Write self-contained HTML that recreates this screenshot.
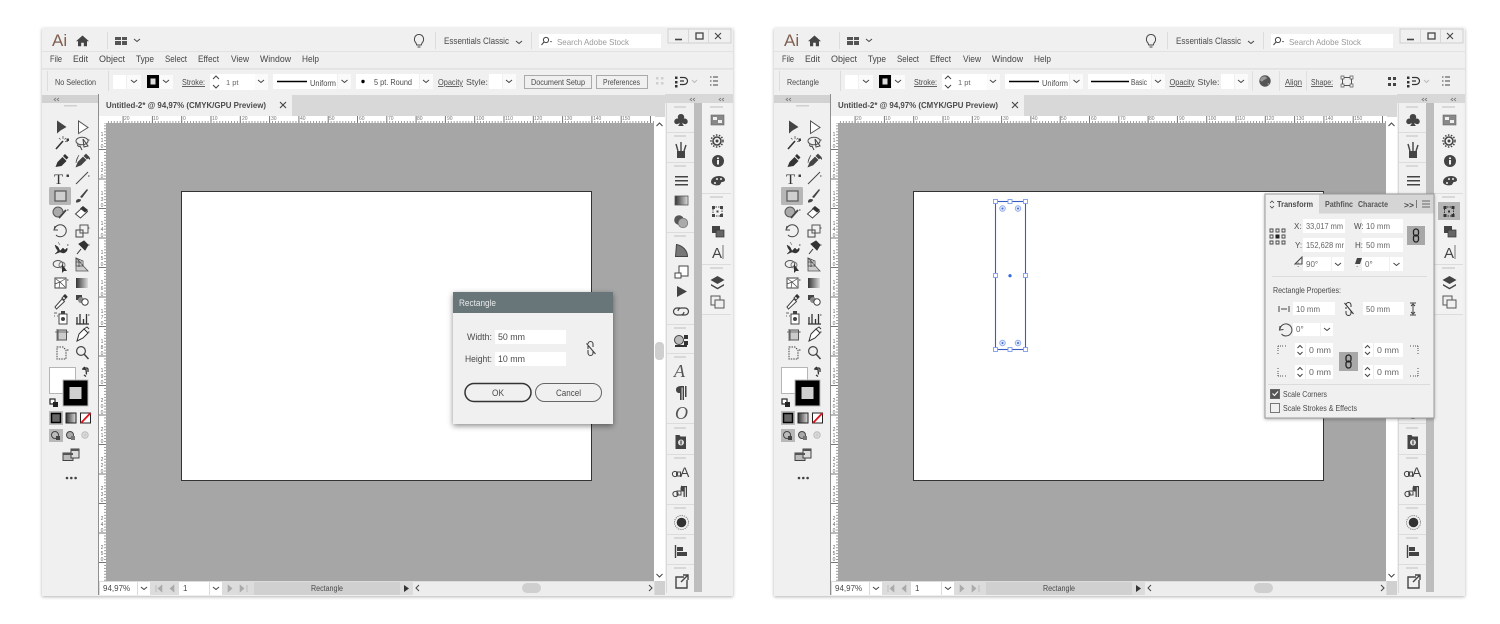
<!DOCTYPE html>
<html><head><meta charset="utf-8"><title>Illustrator Rectangle</title>
<style>
html,body{margin:0;padding:0;background:#fff;width:1500px;height:624px;overflow:hidden}
svg{display:block;filter:blur(.35px)}
text{font-family:"Liberation Sans",sans-serif;fill:#4a4a4a;font-size:8.5px}
.m{font-size:9.5px;fill:#444}
.r{font-size:5px;fill:#777}
.v{font-size:5px;fill:#666;writing-mode:vertical-rl;text-orientation:upright}
.b{font-weight:bold}
.u{text-decoration:underline}
.s{stroke:#444;fill:none;stroke-width:1}
</style></head><body>
<svg width="1500" height="624" viewBox="0 0 1500 624" xmlns="http://www.w3.org/2000/svg">
<filter id="sh" x="-5%" y="-5%" width="110%" height="110%"><feDropShadow dx="0" dy="1" stdDeviation="1.5" flood-color="#000" flood-opacity=".3"/></filter>
<filter id="sd" x="-15%" y="-15%" width="130%" height="130%"><feDropShadow dx="0" dy="2" stdDeviation="3" flood-color="#000" flood-opacity=".45"/></filter>
<pattern id="tx" x="181.2" y="120" width="2.93" height="3" patternUnits="userSpaceOnUse"><rect width="1" height="3" y="1" fill="#999"/></pattern>
<pattern id="tX" x="181.2" y="116" width="29.3" height="7" patternUnits="userSpaceOnUse"><rect width="1" height="7" fill="#777"/></pattern>
<pattern id="ty" x="103" y="149" width="3" height="2.95" patternUnits="userSpaceOnUse"><rect height="1" width="3" x="1" fill="#999"/></pattern>
<pattern id="tY" x="99" y="149" width="7" height="29.5" patternUnits="userSpaceOnUse"><rect height="1" width="7" fill="#777"/></pattern>

<g id="w">
<rect x="42" y="28" width="691" height="568" fill="#f0f0f0" filter="url(#sh)"/>
<path d="M42 51.500h691M42 68.500h691" stroke="#e2e2e2"/>
<path d="M107.500 32v17M435.500 32v17M531.500 32v17" stroke="#dcdcdc"/>
<!-- title bar icons -->
<path d="M82.500 35.500l-6.500 5.700h2v5h3.200v-3.500h2.600v3.500h3.200v-5h2z" fill="#444"/>
<path d="M115 37h6v3h-6zM122 37h5v3h-5zM115 41h6v4h-6zM122 41h5v4h-5z" fill="#555"/>
<path d="M416 43c-3-3-1.500-8.500 3-8.500s6 5.500 3 8.500l-.7 2h-4.600zM417.500 47h3" class="s"/>
<rect x="539" y="34" width="122" height="14" fill="#fff"/>
<circle cx="546" cy="40" r="2.600" class="s"/><path d="M544 42l-2.500 3" class="s"/><path d="M550 41l2 0-1 1.500z" fill="#444"/>
<rect x="668" y="29" width="63" height="14" fill="#f0f0f0" stroke="#cfcfcf"/>
<path d="M688.500 29v14M708.500 29v14" stroke="#d8d8d8"/>
<path d="M675 39.500h7" stroke="#444" stroke-width="1.600"/>
<rect x="696" y="33" width="7" height="6" fill="none" stroke="#444" stroke-width="1.300"/>
<path d="M715 33l6 6M721 33l-6 6" stroke="#444" stroke-width="1.100"/>
<!-- toolbar -->
<path d="M42 69.500h691" stroke="#e6e6e6"/><path d="M47.500 71v20M108.500 71v20" stroke="#dcdcdc"/>
<g fill="#fff">
<rect x="113" y="75" width="13" height="14"/><rect x="127" y="75" width="14" height="14" fill="#fafafa"/>
<rect x="160" y="75" width="13" height="14" fill="#fafafa"/>
<rect x="210" y="74" width="12" height="16"/><rect x="222" y="74" width="33" height="16"/><rect x="255" y="74" width="13" height="16" fill="#fafafa"/>
<rect x="273" y="74" width="64" height="15"/><rect x="338" y="74" width="13" height="15" fill="#fafafa"/>
<rect x="489" y="74" width="13" height="15"/><rect x="503" y="74" width="13" height="15" fill="#fafafa"/>
</g>
<rect x="147" y="75" width="12" height="13" fill="#000"/><rect x="150.500" y="78.500" width="5" height="6" fill="#ddd"/>
<path d="M277 81.500h30" stroke="#000" stroke-width="1.500"/>
<path d="M131 80l3 2.500 3-2.500M163 80l3 2.500 3-2.500M258 80l3 2.500 3-2.500M341.500 80l3 2.500 3-2.500M506 80l3 2.500 3-2.500M134 39l3 2.500 3-2.500M516 41l3 2.500 3-2.500" class="s" stroke="#555"/>
<path d="M213 79l3-3 3 3M213 85l3 3 3-3" class="s"/>
<!-- panel strips -->
<rect x="42" y="95" width="56" height="8" fill="#d2d2d2"/>
<rect x="64" y="105" width="13" height="1.500" fill="#d0d0d0"/>
<rect x="98" y="94" width="1" height="501" fill="#8f8f8f"/>
<rect x="99" y="95" width="566" height="22" fill="#d8d8d8"/>
<rect x="99" y="95" width="193" height="22" fill="#f0f0f0"/>
<!-- rulers -->
<rect x="99" y="116" width="556" height="7" fill="#fff"/><rect x="99" y="116" width="7" height="465" fill="#fff"/>
<rect x="107" y="120" width="547" height="3" fill="url(#tx)"/><rect x="107" y="116" width="547" height="7" fill="url(#tX)"/>
<rect x="103" y="123" width="3" height="458" fill="url(#ty)"/><rect x="99" y="123" width="7" height="458" fill="url(#tY)"/>
<g class="r"><text class="r" x="124" y="120">20</text><text class="r" x="153" y="120">10</text><text class="r" x="183" y="120">0</text><text class="r" x="212" y="120">10</text><text class="r" x="242" y="120">20</text><text class="r" x="271" y="120">30</text><text class="r" x="300" y="120">40</text><text class="r" x="329" y="120">50</text><text class="r" x="359" y="120">60</text><text class="r" x="388" y="120">70</text><text class="r" x="417" y="120">80</text><text class="r" x="447" y="120">90</text><text class="r" x="476" y="120">100</text><text class="r" x="505" y="120">110</text><text class="r" x="534" y="120">120</text><text class="r" x="564" y="120">130</text><text class="r" x="593" y="120">140</text><text class="r" x="622" y="120">150</text></g>
<text class="v" x="102" y="132">110</text><text class="v" x="102" y="162">120</text><text class="v" x="102" y="191">130</text><text class="v" x="102" y="221">140</text><text class="v" x="102" y="250">150</text><text class="v" x="102" y="280">160</text><text class="v" x="102" y="309">170</text><text class="v" x="102" y="339">180</text><text class="v" x="102" y="368">190</text><text class="v" x="102" y="398">200</text><text class="v" x="102" y="427">210</text><text class="v" x="102" y="457">220</text><text class="v" x="102" y="486">230</text><text class="v" x="102" y="516">240</text><text class="v" x="102" y="545">250</text>
<path d="M280 102l6 6M286 102l-6 6" stroke="#444" stroke-width="1.100"/>
<!-- canvas -->
<rect x="106" y="123" width="548" height="458" fill="#a6a6a6"/>
<rect x="181.500" y="191.500" width="410" height="289" fill="#fff" stroke="#333" stroke-width="1"/>
<!-- scrollbar right -->
<rect x="654" y="117" width="11" height="464" fill="#fff"/>
<rect x="655" y="342" width="9" height="18" rx="4" fill="#cfcfcf"/>
<path d="M656.500 126l3-3 3 3M656.500 574l3 3 3-3" class="s" stroke="#666"/>
<rect x="654" y="581" width="11" height="14" fill="#d0d0d0"/>
<!-- status -->
<rect x="99" y="581" width="556" height="14" fill="#dcdcdc"/>
<rect x="100" y="582" width="37" height="13" fill="#fff"/><rect x="138" y="582" width="12" height="13" fill="#fff"/>
<rect x="179" y="582" width="30" height="13" fill="#fff"/><rect x="210" y="582" width="12" height="13" fill="#fff"/>
<rect x="254" y="582" width="146" height="13" fill="#d0d0d0"/>
<rect x="413" y="582" width="241" height="13" fill="#ededed"/>
<rect x="522" y="583" width="19" height="10" rx="5" fill="#cfcfcf"/>
<path d="M141 587l3 2.500 3-2.500M213 587l3 2.500 3-2.500M419 585l-3 3 3 3M649 585l3 3-3 3" class="s" stroke="#555"/>
<path d="M156 585v7M162 585l-4 3.500 4 3.500zM174 585l-4 3.500 4 3.500zM228 585l4 3.500-4 3.500zM240 585l4 3.500-4 3.500zM247 585v7" fill="#aaa" stroke="#aaa" stroke-width=".6"/>
<path d="M404 585l5 3.500-5 3.500z" fill="#333"/>
<!-- right dock -->
<rect x="665" y="94" width="68" height="9" fill="#d8d8d8"/>
<rect x="666" y="95" width="1" height="498" fill="#d9d9d9"/>
<rect x="694" y="103" width="8" height="489" fill="#bdbdbd"/>
<rect x="702" y="103" width="29" height="211" fill="#f2f2f2"/>
<path d="M667 132.500h27M667 162.500h27M667 232.500h27M667 324.500h27M667 353.500h27M667 423.500h27M667 454.500h27M667 504.500h27M667 534.500h27M667 564.500h27M702 193.500h29M702 264.500h29M702 314.500h29" stroke="#dcdcdc"/>
<path d="M674 107h12M674 136h12M674 166h12M674 236h12M674 328h12M674 357h12M674 428h12M674 458h12M674 508h12M674 538h12M674 568h12M710 107h13M710 197h13M710 268h13" stroke="#d0d0d0" stroke-width="1.500"/>
<path d="M692 98l-2 1.500 2 1.500M695 98l-2 1.500 2 1.500M721 98l-2 1.500 2 1.500M724 98l-2 1.500 2 1.500M56 98l-2 1.500 2 1.500M59 98l-2 1.500 2 1.500" fill="none" stroke="#666" stroke-width=".7"/>
<!-- col1 icons -->
<g fill="#444">
<path d="M681 114c2 0 3.200 1.500 3.200 3 0 .7-.2 1.200-.5 1.700 2-.6 4 .7 4 2.900 0 2.800-3.500 3.300-5.400 1.200.1 1.300.6 2.200 1.700 3.200h-6c1.100-1 1.600-1.900 1.700-3.200-1.900 2.100-5.400 1.600-5.400-1.200 0-2.200 2-3.500 4-2.900-.3-.5-.5-1-.5-1.700 0-1.500 1.200-3 3.200-3z"/>
<path d="M677 151h8v7h-8z"/><path d="M678 151l-2-7M681 151v-9M684 151l2-6" stroke="#444" stroke-width="1.400"/>
<path d="M675 176h13v1.500h-13zM675 180h13v1.500h-13zM675 184h13v1.500h-13z"/>
</g>
<linearGradient id="g1"><stop offset="0" stop-color="#333"/><stop offset="1" stop-color="#ddd"/></linearGradient>
<rect x="675" y="196" width="13" height="9" fill="url(#g1)" stroke="#555" stroke-width=".8"/>
<circle cx="679" cy="220" r="4.800" fill="#555"/><circle cx="683" cy="223" r="4.800" fill="#aaa" stroke="#666" stroke-width=".6"/>
<path d="M675.500 256.500h12c0-6-5-11-11-12z" fill="#777" stroke="#444"/>
<rect x="679" y="266" width="9" height="10" fill="#fff" stroke="#444"/><rect x="675" y="273" width="6" height="5" fill="#fff" stroke="#444"/>
<path d="M677 286l10 5.500-10 5.500z" fill="#444"/>
<path d="M680 308h-3a3.500 3.500 0 0 0 0 7h4a3.500 3.500 0 0 0 3-3M682 315h3a3.500 3.500 0 0 0 0-7h-4a3.500 3.500 0 0 0-3 3" fill="none" stroke="#444" stroke-width="1.200"/>
<circle cx="679" cy="340" r="4.500" fill="#bbb" stroke="#444"/><path d="M684 335h4v4h-4zM684 341h4v4h-4zM675 345h12v2h-12z" fill="#333"/>
<text x="674" y="377" style="font:italic 18px 'Liberation Serif';fill:#555">A</text>
<path d="M681 386h3v14h-1.400v-12.500h-1v12.500H680v-7c-3 .3-4-1.500-4-3.500s2-3.500 5-3.500zM685 386h1.500v11H685z" fill="#444"/>
<text x="675" y="419" style="font:italic 18px 'Liberation Serif';fill:#555">O</text>
<path d="M675.500 435h4l1 1.500h5.500v12.500h-10.500z" fill="#444"/><circle cx="681" cy="442.500" r="3" fill="#ddd"/><rect x="680.400" y="440.500" width="1.200" height="4" fill="#444"/>
<text x="680" y="477" style="font-size:14px;fill:#444">A</text><circle cx="675" cy="474" r="2.600" fill="none" stroke="#444"/><rect x="676.500" y="472" width="4" height="4" fill="none" stroke="#444"/>
<path d="M682 486h5v11h-1.200v-9.700h-1v9.700h-1.300v-5.500c-2 0-3-1-3-2.500s.5-3.500 1.500-3.500z" fill="#444"/><circle cx="675.500" cy="494" r="2.600" fill="none" stroke="#444"/><rect x="677" y="491" width="4" height="4" fill="none" stroke="#444"/>
<circle cx="681.500" cy="522.500" r="4.800" fill="#333"/><circle cx="681.500" cy="522.500" r="7" fill="none" stroke="#666" stroke-dasharray="1 1.200"/>
<path d="M675.500 545v13" stroke="#444" stroke-width="1.400"/><path d="M677 547h6v4h-6zM677 552h10v4h-10z" fill="#444"/>
<path d="M684 577h-8v11h11v-8M681 582l6.500-6.500M683 575h5v5" fill="none" stroke="#444" stroke-width="1.400"/>
<!-- col2 icons -->
<rect x="711" y="115" width="13" height="10" fill="#888" stroke="#666" stroke-width=".6"/><path d="M713 117h4v3h-4zM718 120h4v3h-4z" fill="#eee"/>
<circle cx="717" cy="141" r="4" fill="none" stroke="#444" stroke-width="1.600"/><circle cx="717" cy="141" r="6" fill="none" stroke="#444" stroke-dasharray="1.500 1.500" stroke-width="1.500"/><circle cx="717" cy="141" r="1.500" fill="#444"/>
<circle cx="718" cy="161" r="6" fill="#444"/><rect x="717" y="160" width="2" height="4.500" fill="#f0f0f0"/><rect x="717" y="157.500" width="2" height="1.600" fill="#f0f0f0"/>
<path d="M711 182c0-4 4-6 8-6s6 2 6 4c0 1.500-2 2-3 2s-1 2-2.500 3c-3 1-8.500 0-8.500-3z" fill="#444"/><circle cx="717" cy="179" r="1" fill="#f0f0f0"/><circle cx="721" cy="179" r="1" fill="#f0f0f0"/><circle cx="715" cy="183" r="1" fill="#f0f0f0"/>
<rect x="713" y="207" width="9" height="9" fill="none" stroke="#444" stroke-dasharray="1.500 1"/><path d="M712 206h3v3h-3zM720 206h3v3h-3zM712 214h3v3h-3zM720 214h3v3h-3z" fill="#444"/><rect x="716.500" y="210.500" width="2" height="2" fill="#444"/>
<rect x="712" y="226" width="8" height="7" fill="#444"/><rect x="716" y="230" width="8" height="7" fill="#666" stroke="#333" stroke-width=".7"/>
<text x="712" y="258" style="font-size:15px;fill:#444">A</text><path d="M723 245v14" stroke="#777"/>
<path d="M717.500 276l7 4-7 4-7-4z" fill="#444"/><path d="M711 284l6.500 3.800 6.500-3.800 0 1.600-6.500 3.800-6.500-3.800z" fill="#444"/>
<rect x="711" y="296" width="9" height="9" fill="#f0f0f0" stroke="#555"/><rect x="715" y="300" width="9" height="8" fill="#f0f0f0" stroke="#555"/>
<!-- tools -->
<path d="M57 120.500v13l3.500-3 6-3.500z" fill="#444"/>
<path d="M78.500 121v12.500l9.500-6z" fill="#fff" stroke="#555"/>
<path d="M56 149l7-8" stroke="#333" stroke-width="1.600"/><path d="M63 136v3M66 138l-1.500 1.500M68 141.500h-3M59 138l1.500 1.500" stroke="#555" stroke-width=".8"/>
<ellipse cx="82" cy="141" rx="6" ry="3.800" fill="none" stroke="#555"/><path d="M78 144c-1 2 1 3 2 2l2 4M83 139l5 7-4 1z" fill="none" stroke="#444"/>
<path d="M55.500 167l2-5 5-5 4 4-5 5zM63 156l2-2 3.500 3.500-2 2z" fill="#333"/>
<path d="M76 167l2-5 5-5 3 3-5 5zM84 156l2-2 3 3-2 2zM76 163c0-4 2-6 3-8" fill="#444" stroke="#444" stroke-width=".6"/>
<text x="54" y="184" style="font:15px 'Liberation Serif';fill:#333">T</text>
<path d="M76 184l12-12" stroke="#444"/>
<rect x="49" y="187" width="22" height="18" rx="1.500" fill="#b6b6b6"/><rect x="55" y="191" width="11" height="10" fill="#cfcfcf" stroke="#555" stroke-width="1.200"/>
<path d="M79 199c-3 0-3 2-3 3.500 3 0 5-1 5-3zM80 197l7-8 1 1-6 8z" fill="#444"/>
<circle cx="58" cy="212" r="5" fill="#aaa" stroke="#555"/><path d="M59 218l7-8" stroke="#444" stroke-width="1.800"/>
<path d="M75.500 214l7-6.500 5 4-7 6.500z" fill="#fff" stroke="#444"/><path d="M80 208.500l3-2.500 5 4-3 2.500-5-4z" fill="#333"/>
<path d="M55 226l-1 4 4 0M54.500 229a6 6 0 1 1 1.500 6" fill="none" stroke="#444"/>
<rect x="76" y="230" width="7" height="7" fill="none" stroke="#444"/><rect x="80" y="225" width="8" height="8" fill="none" stroke="#555"/>
<path d="M55 245l3 2 2 4 3-3 2 2 2-2c1 2-1 5-4 5l-3-1-5 2 3-3-2-3zM58 242l2 3" fill="#333" stroke="#333" stroke-width=".5"/>
<path d="M77 254l4-5M79 244l5-3 4 4-3 5z" fill="#333" stroke="#333"/>
<ellipse cx="58" cy="264" rx="4.800" ry="3.500" fill="none" stroke="#555"/><ellipse cx="62" cy="265" rx="3" ry="3" fill="none" stroke="#777"/><path d="M62 264v9l2-2 3 0z" fill="#333"/>
<path d="M76 258v13h12l-12-13z" fill="#ccc" stroke="#555" stroke-width=".8"/><path d="M76 258l7 3v5h-7zM76 262h6M79 259v8" fill="none" stroke="#444" stroke-width=".8"/>
<rect x="55" y="278" width="11" height="10" fill="#fff" stroke="#444"/><path d="M56 279l4 3 5-3M59 288l1-6 5 5M55 284l5-2" fill="none" stroke="#444" stroke-width=".7"/>
<rect x="76" y="278" width="12" height="10" fill="url(#g1)"/>
<path d="M55 307l7-8 2.500 2.500-8 7.500zM62 298l3-3 2 2-3 3z" fill="#fff" stroke="#444"/><path d="M63 296l2-2 2.500 2.500-2 2z" fill="#333"/>
<rect x="76" y="295" width="6" height="5" fill="#444"/><circle cx="81" cy="300" r="3" fill="#888"/><circle cx="85" cy="302" r="3.200" fill="#fff" stroke="#444"/>
<rect x="59" y="314" width="8" height="10" fill="#fff" stroke="#444"/><rect x="61" y="311" width="4" height="3" fill="#444"/><circle cx="63" cy="319" r="2" fill="#444"/><path d="M54 313h3M54 316h1M57 316h1" stroke="#666"/>
<path d="M76 324h13M77 324v-7M80 324v-10M83.500 324v-5M86.500 324v-10" stroke="#333" stroke-width="1.300"/>
<rect x="58" y="330" width="8.500" height="10" fill="#ccc" stroke="#555"/><path d="M55 332h12M57 329v12" stroke="#555" stroke-width=".8"/>
<path d="M77 341l2-7 5-5 4 4-5 5zM84 329l3-2 2 2" fill="#fff" stroke="#333"/>
<path d="M57 347h6l3 3v9H57z" fill="none" stroke="#444" stroke-dasharray="1.500 1"/>
<circle cx="81" cy="351" r="4.400" fill="none" stroke="#444" stroke-width="1.200"/><path d="M84 354l4.500 5" stroke="#444" stroke-width="1.500"/>
<path d="M67 139h1.500v1.500H67zM67 157h1M67 175h1.500v1.500H67zM67 210h1.500M88 140h1.500M88 158h1.500v1.500M88 176h1.500M67 245h1.500M88 228h1.500M88 245h1.500M67 280h1.500M88 315h1.500M67 332h1.500M67 350h1.500M88 332h1.500" stroke="#444"/>
<!-- fill stroke -->
<rect x="49.500" y="367.500" width="26" height="26" fill="#fff" stroke="#b5b5b5"/>
<rect x="63" y="380" width="25" height="26" fill="#000" stroke="#bbb"/><rect x="69.500" y="387" width="12" height="12" fill="#cfcfcf"/>
<path d="M82 369l4 .5.5 5M83 368.500l2-1.500M84 375l2 1.500M84 368h3l1 1v3" fill="none" stroke="#333" stroke-width="1.300"/>
<rect x="50" y="399" width="5" height="5" fill="#fff" stroke="#222" stroke-width="1.200"/><rect x="53" y="402" width="5" height="5" fill="#222"/>
<rect x="49" y="411" width="14" height="14" fill="#bbb"/><rect x="51.500" y="413.500" width="9" height="9" fill="#666" stroke="#000" stroke-width="1.500"/>
<rect x="66" y="413" width="10" height="10" fill="url(#g1)" stroke="#222"/>
<rect x="80.500" y="413" width="10" height="10" fill="#fff" stroke="#222"/><path d="M81 423l9.500-10" stroke="#e0141e" stroke-width="1.800"/>
<rect x="49" y="429" width="14" height="13" fill="#b8b8b8"/>
<circle cx="55" cy="435" r="3.500" fill="#bbb" stroke="#444"/><rect x="56" y="436" width="4" height="4" fill="#444"/>
<circle cx="70" cy="435" r="3.500" fill="#aaa" stroke="#444"/><rect x="71" y="436" width="4" height="4" fill="#777"/>
<circle cx="85" cy="435" r="3.200" fill="#ddd" stroke="#bbb"/><circle cx="85" cy="435" r="1.500" fill="#ccc"/>
<rect x="63" y="453" width="10" height="7.500" fill="#bbb" stroke="#444"/><rect x="71" y="449" width="8" height="9" fill="#ddd" stroke="#444"/><rect x="63" y="453" width="10" height="2" fill="#555"/><rect x="71" y="449" width="8" height="2" fill="#555"/>
<circle cx="67" cy="478" r="1.300" fill="#444"/><circle cx="71.300" cy="478" r="1.300" fill="#444"/><circle cx="75.600" cy="478" r="1.300" fill="#444"/>
</g>
<use href="#w" x="732"/>

<!-- WINDOW 1 TEXT -->
<text x="52" y="46" style="font-size:17px;fill:#806050">Ai</text>
<text x="444" y="44" textLength="65" lengthAdjust="spacingAndGlyphs" style="font-size:9.500px">Essentials Classic</text>
<text x="557" y="45" textLength="72" lengthAdjust="spacingAndGlyphs" style="font-size:8.500px;fill:#9a9a9a">Search Adobe Stock</text>
<text class="m" x="50" y="62" textLength="12" lengthAdjust="spacingAndGlyphs">File</text><text class="m" x="73" y="62" textLength="15" lengthAdjust="spacingAndGlyphs">Edit</text><text class="m" x="99" y="62" textLength="26" lengthAdjust="spacingAndGlyphs">Object</text><text class="m" x="136" y="62" textLength="18" lengthAdjust="spacingAndGlyphs">Type</text><text class="m" x="165" y="62" textLength="22" lengthAdjust="spacingAndGlyphs">Select</text><text class="m" x="198" y="62" textLength="21" lengthAdjust="spacingAndGlyphs">Effect</text><text class="m" x="231" y="62" textLength="18" lengthAdjust="spacingAndGlyphs">View</text><text class="m" x="260" y="62" textLength="31" lengthAdjust="spacingAndGlyphs">Window</text><text class="m" x="302" y="62" textLength="17" lengthAdjust="spacingAndGlyphs">Help</text>
<text x="55" y="85" textLength="41" lengthAdjust="spacingAndGlyphs" style="font-size:8px">No Selection</text>
<text class="u" x="182" y="85" textLength="23" lengthAdjust="spacingAndGlyphs" style="font-size:8.500px">Stroke:</text>
<text x="226" y="85" style="font-size:7.500px;fill:#666">1 pt</text>
<text x="310" y="86" textLength="26" lengthAdjust="spacingAndGlyphs" style="font-size:8px">Uniform</text>
<rect x="356" y="74" width="63" height="15" fill="#fff"/><rect x="420" y="74" width="13" height="15" fill="#fafafa"/>
<circle cx="363" cy="81.500" r="1.700" fill="#000"/><path d="M423 80l3 2.500 3-2.500" class="s" stroke="#555"/>
<text x="374" y="85" textLength="38" lengthAdjust="spacingAndGlyphs" style="font-size:8px">5 pt. Round</text>
<text class="u" x="438" y="85" textLength="25" lengthAdjust="spacingAndGlyphs" style="font-size:8.200px">Opacity</text>
<text x="466" y="85" textLength="22" lengthAdjust="spacingAndGlyphs" style="font-size:8.200px">Style:</text>
<rect x="524.500" y="75.500" width="67" height="13" fill="#f0f0f0" stroke="#aaa"/><rect x="596.500" y="75.500" width="51" height="13" fill="#f0f0f0" stroke="#aaa"/>
<text x="531" y="85" textLength="54" lengthAdjust="spacingAndGlyphs" style="font-size:8px">Document Setup</text>
<text x="603" y="85" textLength="37" lengthAdjust="spacingAndGlyphs" style="font-size:8px">Preferences</text>
<path d="M656 77h2.500v2.500H656zM661 77h2.500v2.500H661zM656 82h2.500v2.500H656zM661 82h2.500v2.500H661z" fill="#cfcfcf"/>
<path d="M675 76.500h2.500v2.500H675zM675 85h2.500v2.500H675z" fill="#333"/><path d="M675 81h2.500v2.500H675z" fill="#333"/><path d="M680 77.500h4a3.500 3.500 0 0 1 0 7h-4M680 81h4" fill="none" stroke="#333" stroke-width="1.200"/>
<path d="M692 80l2.500 2.500 2.500-2.500" class="s" stroke="#bbb" style="stroke:#bbb"/>
<path d="M710 77h1.500M710 81h1.500M710 85h1.500M713 77h5M713 81h5M713 85h5" stroke="#444"/>
<text class="b" x="106" y="108" textLength="160" lengthAdjust="spacingAndGlyphs" style="font-size:8px">Untitled-2* @ 94,97% (CMYK/GPU Preview)</text>
<text x="103" y="591" style="font-size:8px">94,97%</text><text x="183" y="591" style="font-size:8px">1</text>
<text x="311" y="591" textLength="32" lengthAdjust="spacingAndGlyphs" style="font-size:8px">Rectangle</text>

<!-- dialog -->
<rect x="453" y="292" width="160" height="132" fill="#f0f0f0" filter="url(#sd)"/>
<rect x="453" y="292" width="160" height="21" fill="#68767a"/>
<text x="459" y="306" textLength="37" lengthAdjust="spacingAndGlyphs" style="font-size:9px;fill:#e6e9e9">Rectangle</text>
<rect x="495" y="330" width="71" height="14" fill="#fff"/><rect x="495" y="352" width="71" height="14" fill="#fff"/>
<text x="467" y="340" textLength="25" lengthAdjust="spacingAndGlyphs" style="font-size:9px">Width:</text>
<text x="465" y="362" textLength="27" lengthAdjust="spacingAndGlyphs" style="font-size:9px">Height:</text>
<text x="498" y="340" textLength="27" lengthAdjust="spacingAndGlyphs" style="font-size:9px">50 mm</text>
<text x="498" y="362" textLength="27" lengthAdjust="spacingAndGlyphs" style="font-size:9px">10 mm</text>
<path d="M588 344a2.500 2.500 0 0 1 5 0v3M588 346v3M593 351v2a2.500 2.500 0 0 1-5 0v-3M586.500 343.500l9 10.500" fill="none" stroke="#444" stroke-width="1.100"/>
<rect x="465" y="383.500" width="66" height="18" rx="9" fill="#f0f0f0" stroke="#333" stroke-width="1.500"/>
<rect x="535.500" y="383.500" width="66" height="18" rx="9" fill="#f0f0f0" stroke="#666"/>
<text x="492" y="396" textLength="12" lengthAdjust="spacingAndGlyphs" style="font-size:9px">OK</text>
<text x="556" y="396" textLength="25" lengthAdjust="spacingAndGlyphs" style="font-size:9px">Cancel</text>

<!-- WINDOW 2 TEXT -->
<text x="784" y="46" style="font-size:17px;fill:#806050">Ai</text>
<text x="1176" y="44" textLength="65" lengthAdjust="spacingAndGlyphs" style="font-size:9.500px">Essentials Classic</text>
<text x="1289" y="45" textLength="72" lengthAdjust="spacingAndGlyphs" style="font-size:8.500px;fill:#9a9a9a">Search Adobe Stock</text>
<text class="m" x="782" y="62" textLength="12" lengthAdjust="spacingAndGlyphs">File</text><text class="m" x="805" y="62" textLength="15" lengthAdjust="spacingAndGlyphs">Edit</text><text class="m" x="831" y="62" textLength="26" lengthAdjust="spacingAndGlyphs">Object</text><text class="m" x="868" y="62" textLength="18" lengthAdjust="spacingAndGlyphs">Type</text><text class="m" x="897" y="62" textLength="22" lengthAdjust="spacingAndGlyphs">Select</text><text class="m" x="930" y="62" textLength="21" lengthAdjust="spacingAndGlyphs">Effect</text><text class="m" x="963" y="62" textLength="18" lengthAdjust="spacingAndGlyphs">View</text><text class="m" x="992" y="62" textLength="31" lengthAdjust="spacingAndGlyphs">Window</text><text class="m" x="1034" y="62" textLength="17" lengthAdjust="spacingAndGlyphs">Help</text>
<text x="787" y="85" textLength="32" lengthAdjust="spacingAndGlyphs" style="font-size:8px">Rectangle</text>
<text class="u" x="914" y="85" textLength="23" lengthAdjust="spacingAndGlyphs" style="font-size:8.500px">Stroke:</text>
<text x="958" y="85" style="font-size:7.500px;fill:#666">1 pt</text>
<text x="1042" y="86" textLength="26" lengthAdjust="spacingAndGlyphs" style="font-size:8px">Uniform</text>
<rect x="1088" y="74" width="63" height="15" fill="#fff"/><rect x="1152" y="74" width="13" height="15" fill="#fafafa"/>
<path d="M1091 81.500h38" stroke="#000" stroke-width="1.600"/><path d="M1155 80l3 2.500 3-2.500" class="s" stroke="#555"/>
<text x="1131" y="85" textLength="16" lengthAdjust="spacingAndGlyphs" style="font-size:8px">Basic</text>
<text class="u" x="1169.500" y="85" textLength="25" lengthAdjust="spacingAndGlyphs" style="font-size:8.200px">Opacity</text>
<text x="1197.500" y="85" textLength="22" lengthAdjust="spacingAndGlyphs" style="font-size:8.200px">Style:</text>
<path d="M1252.500 71v20M1279.500 71v20M1306.500 71v20" stroke="#e0e0e0"/>
<circle cx="1265" cy="81" r="5.700" fill="#555"/><path d="M1262 77c2-1 4-1 5 1-1 2-3 1-4 3-1 1-3 0-3-1 0-1 1-2 2-3zM1267 84l2-1v2z" fill="#999"/>
<text class="u" x="1285" y="85" textLength="17" lengthAdjust="spacingAndGlyphs" style="font-size:8.200px">Align</text>
<text class="u" x="1311" y="85" textLength="22" lengthAdjust="spacingAndGlyphs" style="font-size:8.200px">Shape:</text>
<rect x="1342.500" y="77.500" width="9" height="8" fill="none" stroke="#555"/><path d="M1341 76h3v3h-3zM1350 76h3v3h-3zM1341 84h3v3h-3zM1350 84h3v3h-3z" fill="#f0f0f0" stroke="#555" stroke-width=".7"/>
<path d="M1388 77h3v3h-3zM1393 77h3v3h-3zM1388 83h3v3h-3zM1393 83h3v3h-3z" fill="#444"/>
<path d="M1407 76.500h2.500v2.500h-2.500zM1407 85h2.500v2.500h-2.500zM1407 81h2.500v2.500h-2.500z" fill="#333"/><path d="M1412 77.500h4a3.500 3.500 0 0 1 0 7h-4M1412 81h4" fill="none" stroke="#333" stroke-width="1.200"/>
<path d="M1424 80l2.500 2.500 2.500-2.500" class="s" style="stroke:#bbb"/>
<path d="M1442 77h1.500M1442 81h1.500M1442 85h1.500M1445 77h5M1445 81h5M1445 85h5" stroke="#444"/>
<text class="b" x="838" y="108" textLength="160" lengthAdjust="spacingAndGlyphs" style="font-size:8px">Untitled-2* @ 94,97% (CMYK/GPU Preview)</text>
<text x="835" y="591" style="font-size:8px">94,97%</text><text x="915" y="591" style="font-size:8px">1</text>
<text x="1043" y="591" textLength="32" lengthAdjust="spacingAndGlyphs" style="font-size:8px">Rectangle</text>

<!-- selected rect -->
<rect x="995.500" y="201.500" width="30" height="148" fill="none" stroke="#3a5cc0" stroke-width="1.100"/>
<g fill="#fff" stroke="#7f9cf0" stroke-width=".9"><rect x="993.500" y="199.500" width="4" height="4"/><rect x="1008" y="199.500" width="4" height="4"/><rect x="1023.500" y="199.500" width="4" height="4"/><rect x="993.500" y="273.500" width="4" height="4"/><rect x="1023.500" y="273.500" width="4" height="4"/><rect x="993.500" y="347.500" width="4" height="4"/><rect x="1008" y="347.500" width="4" height="4"/><rect x="1023.500" y="347.500" width="4" height="4"/></g>
<circle cx="1010" cy="275.700" r="1.600" fill="#2f6ae0"/>
<g fill="#dfe6fb" stroke="#8aa4ee" stroke-width=".8"><circle cx="1002.500" cy="208.500" r="2.800"/><circle cx="1018" cy="208.500" r="2.800"/><circle cx="1002.500" cy="343" r="2.800"/><circle cx="1018" cy="343" r="2.800"/></g>
<g fill="#3f66d6"><circle cx="1002.500" cy="208.500" r="1"/><circle cx="1018" cy="208.500" r="1"/><circle cx="1002.500" cy="343" r="1"/><circle cx="1018" cy="343" r="1"/></g>
<!-- highlighted dock icon -->
<rect x="1438" y="202" width="22" height="18" fill="#b5b5b5"/>
<rect x="1444.500" y="207" width="9" height="9" fill="none" stroke="#333" stroke-dasharray="1.500 1"/><path d="M1443.500 206h3v3h-3zM1451.500 206h3v3h-3zM1443.500 214h3v3h-3zM1451.500 214h3v3h-3z" fill="#333"/><rect x="1448" y="210.500" width="2" height="2" fill="#333"/>

<!-- transform panel -->
<rect x="1265" y="194" width="169" height="224" fill="#f0f0f0" stroke="#9a9a9a" filter="url(#sh)"/>
<rect x="1319" y="194.500" width="114.500" height="19" fill="#d5d5d5"/>
<path d="M1270 203l2-2 2 2M1270 206l2 2 2-2" fill="none" stroke="#444" stroke-width=".8"/>
<text class="b" x="1277" y="207" textLength="36" lengthAdjust="spacingAndGlyphs" style="font-size:8px">Transform</text>
<text class="b" x="1325" y="207" textLength="28" lengthAdjust="spacingAndGlyphs" style="font-size:8px;fill:#555">Pathfinc</text>
<text class="b" x="1358" y="207" textLength="30" lengthAdjust="spacingAndGlyphs" style="font-size:8px;fill:#555">Characte</text>
<text class="b" x="1404" y="208" style="font-size:8.500px;fill:#444">&gt;&gt;</text>
<path d="M1416.500 200v8" stroke="#777"/><path d="M1422 201h8M1422 204h8M1422 207h8" stroke="#666"/>
<g fill="#fff">
<rect x="1303" y="219" width="42" height="14"/><rect x="1362" y="219" width="41" height="14"/>
<rect x="1303" y="238" width="42" height="14"/><rect x="1362" y="238" width="41" height="14"/>
<rect x="1303" y="257" width="28" height="14"/><rect x="1332" y="257" width="12" height="14"/><rect x="1362" y="257" width="27" height="14"/><rect x="1390" y="257" width="13" height="14"/>
<rect x="1293" y="302" width="42" height="13"/><rect x="1363" y="302" width="41" height="13"/>
<rect x="1293" y="323" width="27" height="13"/><rect x="1321" y="323" width="12" height="13"/>
<rect x="1295" y="343" width="38" height="14"/><rect x="1363" y="343" width="40" height="14"/>
<rect x="1295" y="365" width="38" height="14"/><rect x="1363" y="365" width="40" height="14"/>
</g>
<path d="M1335 263l3 2.500 3-2.500M1393.500 263l3 2.500 3-2.500M1324 328l3 2.500 3-2.500" class="s" stroke="#555"/>
<path d="M1297.500 348l2.500-2.500 2.500 2.500M1297.500 352l2.500 2.500 2.500-2.500M1365 348l2.500-2.500 2.500 2.500M1365 352l2.500 2.500 2.500-2.500M1297.500 370l2.500-2.500 2.500 2.500M1297.500 374l2.500 2.500 2.500-2.500M1365 370l2.500-2.500 2.500 2.500M1365 374l2.500 2.500 2.500-2.500" class="s" stroke="#555"/>
<path d="M1305.500 343v14M1305.500 365v14M1373.500 343v14M1373.500 365v14" stroke="#eee"/>
<g style="font-size:8px">
<text x="1294" y="229" style="font-size:8px">X:</text><text x="1354" y="229" style="font-size:8px">W:</text>
<text x="1295" y="248" style="font-size:8px">Y:</text><text x="1355" y="248" style="font-size:8px">H:</text>
<text x="1306" y="229" textLength="37" lengthAdjust="spacingAndGlyphs" style="font-size:8px;fill:#666">33,017 mm</text>
<text x="1366" y="229" textLength="24" lengthAdjust="spacingAndGlyphs" style="font-size:8px;fill:#666">10 mm</text>
<text x="1306" y="248" textLength="38" lengthAdjust="spacingAndGlyphs" style="font-size:8px;fill:#666">152,628 mr</text>
<text x="1366" y="248" textLength="24" lengthAdjust="spacingAndGlyphs" style="font-size:8px;fill:#666">50 mm</text>
<text x="1306" y="267" style="font-size:8px;fill:#666">90°</text><text x="1365" y="267" style="font-size:8px;fill:#666">0°</text>
<text x="1297" y="267" style="font-size:8px">:</text><text x="1356" y="267" style="font-size:8px">:</text>
<text x="1273" y="293" textLength="68" lengthAdjust="spacingAndGlyphs" style="font-size:8.500px">Rectangle Properties:</text>
<text x="1296" y="312" textLength="24" lengthAdjust="spacingAndGlyphs" style="font-size:8px;fill:#666">10 mm</text>
<text x="1366" y="312" textLength="24" lengthAdjust="spacingAndGlyphs" style="font-size:8px;fill:#666">50 mm</text>
<text x="1296" y="332" style="font-size:8px;fill:#666">0°</text>
<text x="1309" y="353" textLength="22" lengthAdjust="spacingAndGlyphs" style="font-size:8px;fill:#666">0 mm</text>
<text x="1377" y="353" textLength="22" lengthAdjust="spacingAndGlyphs" style="font-size:8px;fill:#666">0 mm</text>
<text x="1309" y="375" textLength="22" lengthAdjust="spacingAndGlyphs" style="font-size:8px;fill:#666">0 mm</text>
<text x="1377" y="375" textLength="22" lengthAdjust="spacingAndGlyphs" style="font-size:8px;fill:#666">0 mm</text>
<text x="1283" y="397" textLength="44" lengthAdjust="spacingAndGlyphs" style="font-size:8px">Scale Corners</text>
<text x="1283" y="411" textLength="74" lengthAdjust="spacingAndGlyphs" style="font-size:8px">Scale Strokes &amp; Effects</text>
</g>
<path d="M1270 229h3v3h-3zM1276 229h3v3h-3zM1282 229h3v3h-3zM1270 235h3v3h-3zM1282 235h3v3h-3zM1270 241h3v3h-3zM1276 241h3v3h-3zM1282 241h3v3h-3z" fill="none" stroke="#444" stroke-width=".9"/><rect x="1275.500" y="234.500" width="4" height="4" fill="#222"/>
<path d="M1407 226h18v19h-18z" fill="#a8a8a8"/>
<rect x="1413.500" y="229" width="5" height="7" rx="2.500" fill="none" stroke="#222" stroke-width="1.300"/><rect x="1413.500" y="235" width="5" height="7" rx="2.500" fill="none" stroke="#222" stroke-width="1.300"/>
<rect x="1339" y="352" width="19" height="19" fill="#a8a8a8"/>
<rect x="1346" y="355" width="5" height="7" rx="2.500" fill="none" stroke="#222" stroke-width="1.300"/><rect x="1346" y="361" width="5" height="7" rx="2.500" fill="none" stroke="#222" stroke-width="1.300"/>
<path d="M1295 264l7-7v7zM1295 264h6" fill="none" stroke="#444"/>
<path d="M1355 264l2-6h5l-2 6z" fill="#444"/>
<path d="M1279 306v6M1289 306v6M1281 309h6" stroke="#444"/>
<path d="M1346 305a2.500 2.500 0 0 1 5 0v2M1346 307v2M1351 311v2a2.500 2.500 0 0 1-5 0v-2M1344.500 303l9 11" fill="none" stroke="#333" stroke-width="1"/>
<path d="M1410 303h6M1410 315h6M1413 305v8M1411 306l2-2 2 2M1411 312l2 2 2-2" fill="none" stroke="#444"/>
<path d="M1280 326l-.5 4 4-.5M1280 329a6 6 0 1 1 1.500 5" fill="none" stroke="#444"/>
<path d="M1278 346h5M1278 346v5M1285 346h1M1278 353v1" stroke="#555" stroke-dasharray="1 1"/>
<path d="M1418 346h-5M1418 346v5M1411 346h-1M1418 353v1" stroke="#555" stroke-dasharray="1 1"/>
<path d="M1278 376h5M1278 376v-5M1285 376h1M1278 369v-1" stroke="#555" stroke-dasharray="1 1"/>
<path d="M1418 376h-5M1418 376v-5M1411 376h-1M1418 369v-1" stroke="#555" stroke-dasharray="1 1"/>
<path d="M1272 276.500h155M1268 384.500h162" stroke="#dcdcdc"/>
<rect x="1270.500" y="389.500" width="9" height="9" fill="#555" stroke="#666"/><path d="M1272.500 393.500l2 2 3.500-4" fill="none" stroke="#fff" stroke-width="1.100"/>
<rect x="1270.500" y="403.500" width="9" height="9" fill="#f0f0f0" stroke="#777"/>
</svg>
</body></html>
